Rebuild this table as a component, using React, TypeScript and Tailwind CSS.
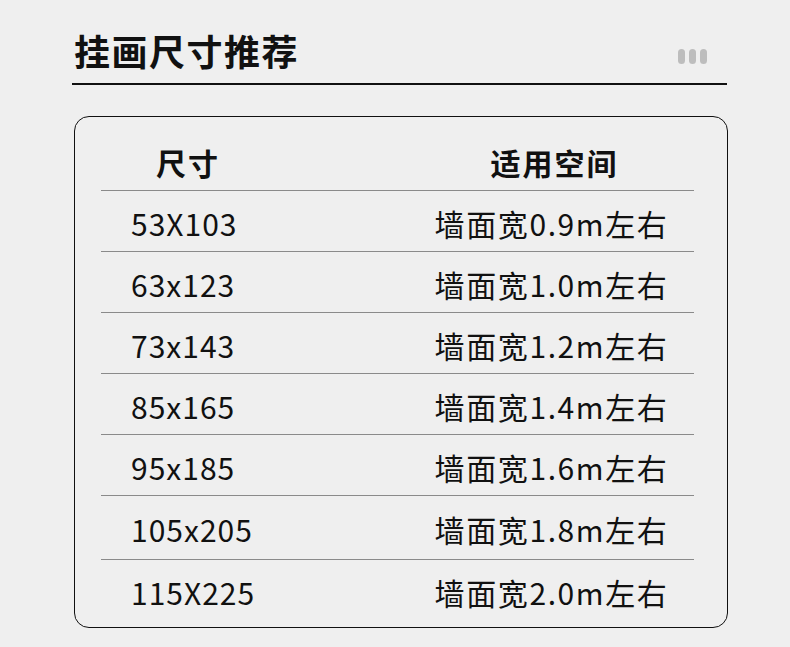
const rows = [
  { size: "53X103", space: "墙面宽0.9m左右", h: "h-[61px]" },
  { size: "63x123", space: "墙面宽1.0m左右", h: "h-[61px]" },
  { size: "73x143", space: "墙面宽1.2m左右", h: "h-[61px]" },
  { size: "85x165", space: "墙面宽1.4m左右", h: "h-[61px]" },
  { size: "95x185", space: "墙面宽1.6m左右", h: "h-[61px]" },
  { size: "105x205", space: "墙面宽1.8m左右", h: "h-[64px]" },
  { size: "115X225", space: "墙面宽2.0m左右", h: "h-[61px]" },
];

export default function App() {
  return (
    <div className="w-[790px] h-[647px] bg-[#efefef] text-[#111] font-['Noto_Sans_CJK_SC','Noto_Sans',sans-serif] overflow-hidden">
      {/* title */}
      <div className="flex items-center justify-between pt-[26px] pl-[74px] pr-[83px]">
        <h1 className="text-[36px] font-bold leading-[48px] tracking-[1.5px]">挂画尺寸推荐</h1>
        <div className="flex gap-[4px] pt-[12px]">
          <span className="w-[7px] h-[15px] rounded-full bg-[#bdbdbd]" />
          <span className="w-[7px] h-[15px] rounded-full bg-[#bdbdbd]" />
          <span className="w-[7px] h-[15px] rounded-full bg-[#bdbdbd]" />
        </div>
      </div>
      <div className="ml-[72px] mt-[9px] w-[655px] h-[2px] bg-[#111]" />

      {/* table */}
      <div className="ml-[74px] mt-[31px] w-[654px] h-[512px] border border-[#111] rounded-[15px] pl-[26px] pr-[33px]">
        <div className="grid grid-cols-[314px_1fr] h-[73px] pt-[17px] items-center text-[30px] font-bold tracking-[2px]">
          <div className="w-[174px] text-center">尺寸</div>
          <div className="text-center">适用空间</div>
        </div>
        {rows.map((r) => (
          <div
            key={r.size}
            className={`grid grid-cols-[314px_1fr] items-center border-t border-[#8a8a8a] text-[30px] ${r.h}`}
          >
            <div className="pl-[30px] pt-[4px] tracking-[1px]">{r.size}</div>
            <div className="text-center pr-[6px] pt-[4px] tracking-[1.6px]">{r.space}</div>
          </div>
        ))}
      </div>
    </div>
  );
}
